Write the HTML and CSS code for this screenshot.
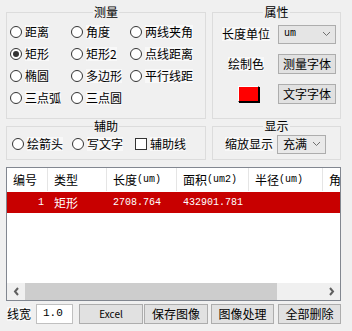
FILE: index.html
```html
<!DOCTYPE html>
<html>

	<head>
		<meta charset="UTF-8">
		<title>测量</title>
		<link rel="stylesheet" href="styles.css">
	</head>

	<body>
		<div class="wrap">
			<div class="top">
				<div class="colLeft">
					<fieldset class="group measure">
						<legend>测量</legend>
						<div class="radioGrid">
							<label class="opt"><span class="radio"></span><span class="txt">距离</span></label>
							<label class="opt"><span class="radio"></span><span class="txt">角度</span></label>
							<label class="opt"><span class="radio"></span><span class="txt">两线夹角</span></label>
							<label class="opt"><span class="radio on"></span><span class="txt">矩形</span></label>
							<label class="opt"><span class="radio"></span><span class="txt">矩形2</span></label>
							<label class="opt"><span class="radio"></span><span class="txt">点线距离</span></label>
							<label class="opt"><span class="radio"></span><span class="txt">椭圆</span></label>
							<label class="opt"><span class="radio"></span><span class="txt">多边形</span></label>
							<label class="opt"><span class="radio"></span><span class="txt">平行线距</span></label>
							<label class="opt"><span class="radio"></span><span class="txt">三点弧</span></label>
							<label class="opt"><span class="radio"></span><span class="txt">三点圆</span></label>
						</div>
					</fieldset>
					<fieldset class="group assist">
						<legend>辅助</legend>
						<div class="assistRow">
							<label class="opt"><span class="radio"></span><span class="txt">绘箭头</span></label>
							<label class="opt"><span class="radio"></span><span class="txt">写文字</span></label>
							<label class="opt"><span class="check"></span><span class="txt">辅助线</span></label>
						</div>
					</fieldset>
				</div>
				<div class="colRight">
					<fieldset class="group props">
						<legend>属性</legend>
						<div class="propRow">
							<span class="txt">长度单位</span>
							<div class="select unit">
								<span class="val num">um</span>
								<svg width="9" height="6" viewBox="0 0 9 6"><path d="M1 1 L4.5 4.5 L8 1" fill="none" stroke="#707070" stroke-width="1"/></svg>
							</div>
						</div>
						<div class="propRow">
							<span class="txt colorLbl">绘制色</span>
							<button class="btn fontBtn">测量字体</button>
						</div>
						<div class="propRow">
							<span class="swatch"></span>
							<button class="btn fontBtn">文字字体</button>
						</div>
					</fieldset>
					<fieldset class="group display">
						<legend>显示</legend>
						<div class="propRow zoomRow">
							<span class="txt">缩放显示</span>
							<div class="select fill">
								<span class="val">充满</span>
								<svg width="9" height="6" viewBox="0 0 9 6"><path d="M1 1 L4.5 4.5 L8 1" fill="none" stroke="#707070" stroke-width="1"/></svg>
							</div>
						</div>
					</fieldset>
				</div>
			</div>

			<div class="list">
				<div class="listBody">
					<div class="tr head">
						<div class="c c1">编号</div>
						<div class="c c2">类型</div>
						<div class="c c3">长度<span class="num">(um)</span></div>
						<div class="c c4">面积<span class="num">(um2)</span></div>
						<div class="c c5">半径<span class="num">(um)</span></div>
						<div class="c c6">角</div>
					</div>
					<div class="tr sel">
						<div class="c c1 right"><span class="num">1</span></div>
						<div class="c c2">矩形</div>
						<div class="c c3"><span class="num">2708.764</span></div>
						<div class="c c4"><span class="num">432901.781</span></div>
						<div class="c c5"></div>
						<div class="c c6"></div>
					</div>
				</div>
				<div class="hscroll">
					<span class="arrow"><svg width="7" height="9" viewBox="0 0 7 9"><path d="M5 1 L2 4.5 L5 8" fill="none" stroke="#606060" stroke-width="2"/></svg></span>
					<span class="thumb"></span>
					<span class="track"></span>
					<span class="arrow"><svg width="7" height="9" viewBox="0 0 7 9"><path d="M2 1 L5 4.5 L2 8" fill="none" stroke="#606060" stroke-width="2"/></svg></span>
				</div>
			</div>

			<div class="bottom">
				<span class="txt">线宽</span>
				<div class="lineInput num">1.0</div>
				<button class="btn b1 num">Excel</button>
				<button class="btn b2">保存图像</button>
				<button class="btn b3">图像处理</button>
				<button class="btn b4">全部删除</button>
			</div>
		</div>
	</body>

</html>
```

FILE: styles.css
```css
* {
	margin: 0;
	padding: 0;
	box-sizing: border-box;
}

body {
	background: #f0f0f0;
	font-family: "Noto Sans CJK SC", sans-serif;
	font-size: 12px;
	color: #000;
	width: 352px;
	height: 331px;
	overflow: hidden;
}

.wrap {
	padding: 5px 11px 0 6px;
}

.num {
	font-family: "Liberation Mono", monospace;
	font-size: 10px;
}

.top {
	display: flex;
	gap: 6px;
}

.colLeft {
	width: 200px;
	display: flex;
	flex-direction: column;
}

.colRight {
	width: 129px;
	display: flex;
	flex-direction: column;
}

/* 分组框 */
.group {
	border: 1px solid #dcdcdc;
	min-width: 0;
}

.group legend {
	margin: 0 auto;
	padding: 0 1px;
	line-height: 14px;
	font-size: 12px;
}

.measure,
.props {
	height: 114px;
}

.assist,
.display {
	height: 41px;
}

.txt {
	background: #f8f8f8;
	line-height: 14px;
}

/* 单选 */
.radioGrid {
	display: grid;
	grid-template-columns: 61px 59px 1fr;
	grid-auto-rows: 22px;
	padding: 2px 0 0 3px;
}

.opt {
	display: flex;
	align-items: center;
	gap: 3px;
	white-space: nowrap;
}

.radio {
	width: 12px;
	height: 12px;
	border: 1px solid #333;
	border-radius: 50%;
	background: #fff;
	display: flex;
	align-items: center;
	justify-content: center;
	flex: none;
}

.radio.on::after {
	content: "";
	width: 6px;
	height: 6px;
	border-radius: 50%;
	background: #333;
}

.check {
	width: 12px;
	height: 12px;
	border: 1px solid #333;
	background: #fff;
	flex: none;
}

.assistRow {
	display: flex;
	gap: 9px;
	padding: 4px 0 0 5px;
}

.assistRow .opt:last-child {
	margin-left: 3px;
}

/* 属性 */
.propRow {
	display: flex;
	align-items: center;
	justify-content: space-between;
	height: 30px;
	padding: 0 4px 0 9px;
}

.colorLbl {
	margin-left: 6px;
}

.swatch {
	width: 21px;
	height: 16px;
	background: #f00;
	border: 1px solid;
	border-color: #fff #000 #000 #fff;
	box-shadow: 1px 1px 0 #000;
	margin-left: 16px;
}

.select {
	display: flex;
	align-items: center;
	justify-content: space-between;
	height: 19px;
	border: 1px solid #adadad;
	background: #e5e5e5;
	padding: 0 4px 0 5px;
}

.select.unit {
	width: 58px;
}

.select.fill {
	width: 49px;
	background: #e9e9e9;
}

.select .val {
	line-height: 14px;
}

.zoomRow {
	height: 22px;
	padding-left: 12px;
	padding-right: 14px;
}

.btn {
	height: 20px;
	border: 1px solid #adadad;
	background: #e1e1e1;
	font-family: "Noto Sans CJK SC", sans-serif;
	font-size: 12px;
	line-height: 16px;
	color: #000;
}

.fontBtn {
	width: 58px;
}

/* 列表 */
.list {
	margin-top: 7px;
	width: 335px;
	height: 134px;
	border: 1px solid #828790;
	background: #fff;
	display: flex;
	flex-direction: column;
	overflow: hidden;
}

.listBody {
	flex: 1;
	overflow: hidden;
}

.tr {
	display: flex;
	white-space: nowrap;
}

.tr.head {
	height: 23px;
	align-items: stretch;
}

.tr.head .c {
	border-right: 1px solid #e5e5e5;
	display: flex;
	align-items: center;
	padding-left: 6px;
}

.tr.sel {
	height: 21px;
	margin-top: 1px;
	background: #c80000;
	color: #fff;
}

.tr.sel .c {
	display: flex;
	align-items: center;
	padding-left: 6px;
}

.tr.sel .c.right {
	justify-content: flex-end;
	padding-right: 4px;
}

.c {
	flex: none;
	overflow: hidden;
}

.c1 { width: 41px; }
.c2 { width: 59px; }
.c3 { width: 70px; }
.c4 { width: 72px; }
.c5 { width: 74px; }
.c6 { width: 40px; }

.hscroll {
	height: 17px;
	display: flex;
	align-items: stretch;
	background: #f0f0f0;
}

.hscroll .arrow {
	width: 18px;
	display: flex;
	align-items: center;
	justify-content: center;
	flex: none;
}

.hscroll .thumb {
	width: 252px;
	background: #cdcdcd;
}

.hscroll .track {
	flex: 1;
}

/* 底部 */
.bottom {
	display: flex;
	align-items: center;
	height: 20px;
	margin-top: 3px;
	padding-left: 1px;
}

.lineInput {
	width: 37px;
	height: 20px;
	margin-left: 5px;
	background: #fff;
	border: 1px solid #c0c0c0;
	padding: 2px 0 0 6px;
	font-size: 11px;
}

.b1 { width: 64px; margin-left: 6px; font-size: 10px; }
.b2 { width: 64px; margin-left: 1px; }
.b3 { width: 63px; margin-left: 3px; }
.b4 { width: 63px; margin-left: 4px; }
```
